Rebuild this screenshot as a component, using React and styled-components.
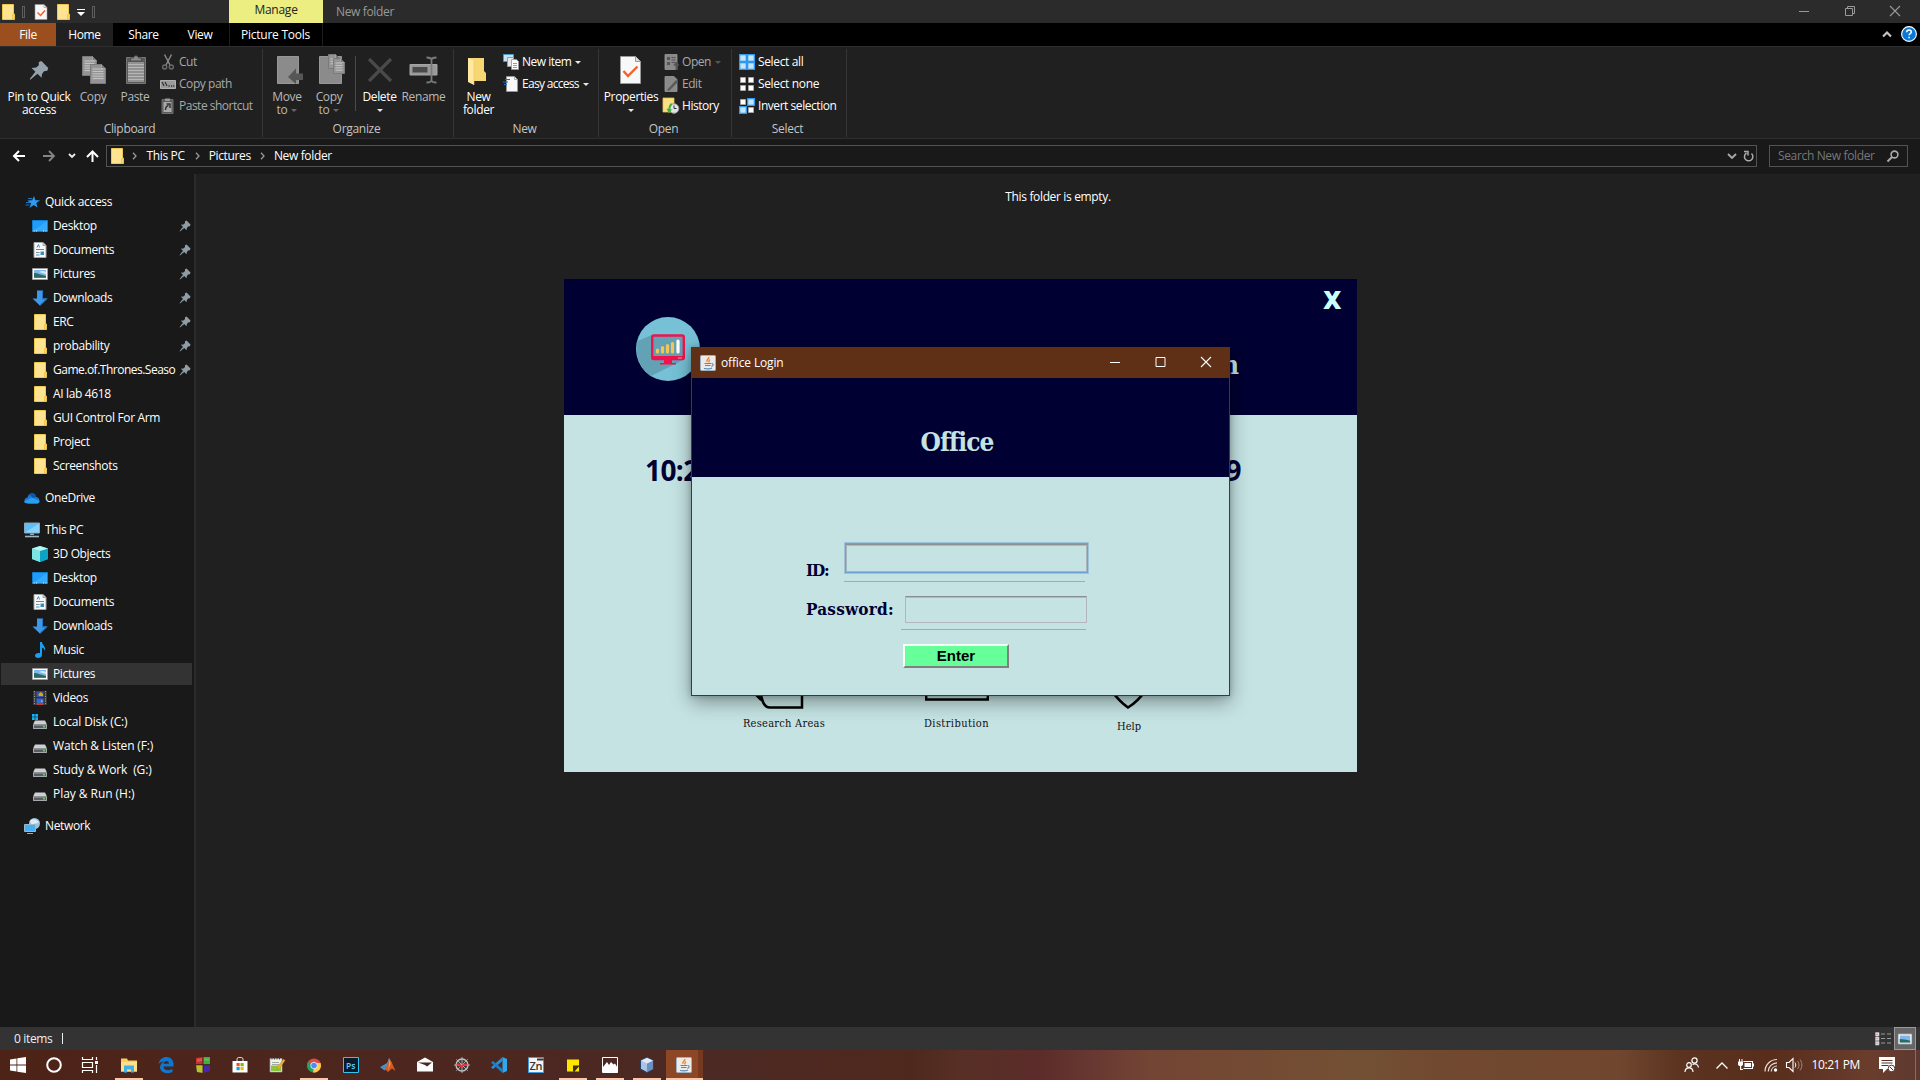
import React from 'react';
import styled, { createGlobalStyle, css } from 'styled-components';

const Global = createGlobalStyle`
  * { box-sizing: border-box; }
  html, body { margin: 0; background: #202020; overflow: hidden; }
  svg { display: block; flex: none; overflow: visible; }
`;

const UI = "'Open Sans', 'Noto Sans', sans-serif";
const SLAB = "'Roboto Slab', 'DejaVu Serif Condensed', 'DejaVu Serif', serif";

const Screen = styled.div`
  width: 1920px; height: 1080px; display: flex; flex-direction: column; position: relative;
  overflow: hidden; background: #202020; color: #fff; font: 12px/16px ${UI}; letter-spacing: -0.35px; white-space: nowrap;
`;
const Label = styled.span`
  letter-spacing: ${p => p.$ls ?? -0.35}px; color: ${p => p.$c || 'inherit'}; white-space: pre;
`;
const Gap = styled.div`flex: none; width: ${p => p.$w || 0}px; height: ${p => p.$h || 0}px;`;

/* ---------- icons ---------- */
const Svg = ({ w = 16, h = 16, vb, children, ...r }) => (
  <svg width={w} height={h} viewBox={vb || `0 0 ${w} ${h}`} fill="none" {...r}>{children}</svg>
);
const Folder = () => (
  <Svg><path d="M2.5.5h11v9.500h1v5.500h-12z" fill="#fee391" stroke="#eec84f" /><path d="M12.500 15V10.500h2V15z" fill="#fbd866" stroke="#e0b840" strokeWidth=".6" /></Svg>
);
const CheckDoc = () => (
  <Svg><path d="M2 .5h9l3 3V15.500H2z" fill="#f6f7f9" stroke="#999" strokeWidth=".6" /><path d="M11 .5v3h3" stroke="#999" strokeWidth=".7" /><path d="M4.500 8.500l3 3 4.500-5" stroke="#f2622a" strokeWidth="1.500" /></Svg>
);
const PinBig = () => (
  <Svg w={30} h={30}><path transform="translate(4.500 6) scale(1.720)" d="M6 1.200l1.500-.6 4 4-.6 1.600-1.900.4-1.200 1.700-.2 2L5.200 8 1 11.500.7 11 4 6.800 1.800 4.700l2.700-.3L6 3z" fill="#96a3ac" /></Svg>
);
const Pin = () => (
  <Svg w={12} h={12}><path d="M6 1.200l1.500-.6 4 4-.6 1.600-1.900.4-1.200 1.700-.2 2L5.200 8 1 11.500.7 11 4 6.800 1.800 4.700l2.700-.3L6 3z" fill="#909da6" /></Svg>
);
const page = (x, y, w, h, k) => (
  <g key={k}><path d={`M${x} ${y}h${w - 4}l4 4v${h - 4}h-${w}z`} fill="#949494" stroke="#7b7b7b" />
    <path d={`M${x + w - 4} ${y}v4h4`} fill="#777" stroke="#aaa" strokeWidth=".8" />
    {Array.from({ length: Math.floor((h - 5) / 2.4) }, (_, i) => <path key={i} d={`M${x + 2} ${y + 4.500 + i * 2.400}h${w - 4}`} stroke="#c8c8c8" />)}</g>
);
const CopyBig = () => <Svg w={30} h={30}>{page(4.500, 2.500, 14, 19, 'a')}{page(12.500, 10.500, 15, 19, 'b')}</Svg>;
const PasteBig = () => (
  <Svg w={30} h={30}><path d="M6.500 3.500h19v26h-19z" fill="#5a5a5a" stroke="#777" /><path d="M8 8h16v20H8z" fill="#919191" /><path d="M10.500 7V4h3c0-3 5-3 5 0h3v3z" fill="#8b8b8b" stroke="#4a4a4a" />
    {[10, 13, 16, 19, 22, 25].map(y => <path key={y} d={`M8 ${y}.5h16`} stroke="#b7b7b7" />)}</Svg>
);
const MoveBig = () => <Svg w={30} h={30}><path d="M5.500 2.500h21v27h-21z" fill="#8b8b8b" stroke="#979797" /><path d="M31 19.500h-7v-5L16 23l8 7v-4h7z" fill="#565656" /></Svg>;
const CopyToBig = () => <Svg w={30} h={30}><path d="M5.500 2.500h22v27h-22z" fill="#8b8b8b" stroke="#979797" />{page(14.500, .5, 11, 14, 'a')}{page(19.500, 4.500, 11, 15, 'b')}</Svg>;
const DeleteBig = () => <Svg w={30} h={30}><path d="M4 5l22 22M26 5L4 27" stroke="#4a4a4a" strokeWidth="3.200" /></Svg>;
const RenameBig = () => <Svg w={30} h={30}><path d="M1 10.500h27v10.500H1z" fill="#999" stroke="#a5a5a5" /><path d="M3.500 13h15v5.500h-15z" fill="#4a4a4a" /><path d="M17.500 3.500c3 0 5 .5 5 2.500 0-2 2-2.500 5-2.500M17.500 28.500c3 0 5-.5 5-2.500 0 2 2 2.500 5 2.500M22.500 6v20" stroke="#7a7a7a" strokeWidth="1.800" /></Svg>;
const NewFolderBig = () => <Svg w={30} h={30}><path d="M4 4h16v13l2 2v8H4z" fill="#f7d774" /><path d="M4 4l6 3v24l-6-3z" fill="#ffe9a2" /><path d="M10 7v24" stroke="#eac65b" strokeWidth=".6" /></Svg>;
const PropsBig = () => <Svg w={30} h={30}><path d="M4.500 2.500h15l5 5v22h-20z" fill="#f7f8fa" stroke="#999" /><path d="M19.500 2.500v5h5" fill="#ddd" stroke="#999" /><path d="M7.500 17l4.500 5 9.500-9.500" stroke="#f2622a" strokeWidth="2.400" /></Svg>;
const Cut = () => <Svg><path d="M4.500.5L10 11M11.500.5L6 11" stroke="#8d8d8d" strokeWidth="1.400" /><circle cx="4.700" cy="13" r="2" stroke="#6b6b6b" strokeWidth="1.400" /><circle cx="11.300" cy="13" r="2" stroke="#6b6b6b" strokeWidth="1.400" /></Svg>;
const CopyPath = () => <Svg><path d="M.5 4.500h15v8H.5z" fill="#9a9a9a" stroke="#b0b0b0" /><path d="M2 6l2 4M5 6l2 4" stroke="#333" strokeWidth="1.200" /><path d="M8.500 10h1.200M11 10h1.200M13.200 10h1.200" stroke="#333" strokeWidth="1.400" /></Svg>;
const PasteShort = () => <Svg><path d="M2 1.500h11v14H2z" fill="#5a5a5a" stroke="#6e6e6e" /><path d="M3.500 4h8v10h-8z" fill="#aaa" /><path d="M5 .5h5V3H5z" fill="#999" /><path d="M5.500 12c0-3 1-4 3-4.500M6.500 6h3.500v4" stroke="#333" strokeWidth="1.500" /></Svg>;
const NewItem = () => <Svg><path d="M.5.5h10v7H.5z" fill="#bfe3f5" stroke="#4c98c8" /><path d="M4.500 3.500h6v9h-6z" fill="#e8e8ea" stroke="#999" /><path d="M8.500 5.500h5l2 2v8h-7z" fill="#fff" stroke="#999" strokeWidth=".8" /><path d="M10 9.500h4M10 11.500h4M10 13.500h4" stroke="#9d8fd0" /></Svg>;
const EasyAccess = () => <Svg><path d="M3.500.5h8l3 3v12h-11z" fill="#f7f8fa" stroke="#999" strokeWidth=".8" /><path d="M11.500.5v3h3" stroke="#999" strokeWidth=".8" /><path d="M2 3.500h5M0 6h5M1 8.500h3" stroke="#2270b8" strokeWidth="1.200" /></Svg>;
const OpenI = () => <Svg><path d="M2 .5h12v15H2z" fill="#8a8a8a" stroke="#999" strokeWidth=".8" /><path d="M4 3h3v3H4zM4 8h3v3H4z" fill="#555" /><path d="M8.500 3.500h4M8.500 6h4M8.500 8.500h4" stroke="#555" /><path d="M12.500 16v-4.500H10l3.500-4 3 4h-2V16z" fill="#555" /></Svg>;
const EditI = () => <Svg><path d="M2 .5h9l3 3v12H2z" fill="#8a8a8a" stroke="#999" strokeWidth=".8" /><path d="M4 14L13 4l2 2-9 9z" fill="#5a5a5a" /></Svg>;
const HistoryI = () => <Svg><path d="M0 0h11v14H0z" fill="#fbdf80" stroke="#e8c24b" strokeWidth=".8" /><circle cx="11" cy="10.500" r="4.800" fill="#dfe3e6" stroke="#999" /><path d="M11 7.500v3h2.500" stroke="#333" /><path d="M8 5c-2 2-2.500 3.500-2.300 6l-2.200-.5L6 15.500l3-4-1.500-.2C7.300 9.500 8 8 9.500 6.500z" fill="#3bb33b" /></Svg>;
const Grid4 = ({ on }) => (
  <Svg>{[[0, 0], [8, 0], [0, 8], [8, 8]].map(([x, y], i) => (on[i]
    ? <g key={i}><path d={`M${x} ${y}h8v8h-8z`} fill="#2f98ec" /><path d={`M${x + 1.300} ${y + 1.300}h5.400v5.400h-5.400z`} fill="#c4e6fb" /></g>
    : <path key={i} d={`M${x + 1.500} ${y + 1.500}h5v5h-5z`} fill="#fff" stroke="#a5a5a5" />))}</Svg>
);
const Star = () => <Svg><g transform="translate(1 0)"><path d="M9 2l1.300 4.200 4.700.1-3.700 2.700 1.200 4.500-3.800-2.600L4.500 14l1.600-4.700L2.300 6.500l4.800-.2z" fill="#2b9cf2" /><path d="M1 8.500h4M.5 11h4M3 4.500h4" stroke="#1d7fd0" strokeWidth=".9" /></g></Svg>;
const Desktop = () => <Svg><path d="M.5 2.500h15v11H.5z" fill="#1e9dfa" stroke="#0f7ed0" /><path d="M1 13L15 3v10z" fill="#34abff" /><path d="M1.500 13h1.200M4 13h1M11 13h1M13.500 13h1" stroke="#fff" strokeWidth=".9" /></Svg>;
const Docs = () => <Svg><path d="M2 .5h9l3 3v12H2z" fill="#f7f8fa" stroke="#a5a5a5" /><path d="M11 .5v3h3" fill="#ccc" stroke="#999" strokeWidth=".8" /><path d="M5 5.500l1.500-3 1 3M4 7.500h8M4 13h3.500" stroke="#3b93cf" /><path d="M4 10.500h3.500" stroke="#888" /><path d="M8.500 9.500h3.500v3.500H8.500z" fill="#3a8eb5" /></Svg>;
const Pics = () => <Svg><path d="M.5 2.500h15v11H.5z" fill="#fff" stroke="#9c9c9c" /><path d="M2 4h12v8H2z" fill="#7fb6ee" /><path d="M2 7c4 0 7 2 12 3v2H2z" fill="#2d6b5f" /><path d="M7 6c3-1.500 5-1 7 0v2z" fill="#d8ebfb" /><path d="M2 11h12v1H2z" fill="#3c78b5" /></Svg>;
const Down = () => <Svg><path d="M5 .5h6v8h4.500L8 15.800.5 8.500H5z" fill="#3d97ea" /><path d="M10 .5h1v8h4.500L8 15.800V14.500l5.500-5H10z" fill="#2275c4" /></Svg>;
const Cloud = () => <Svg><path d="M3.500 13.500C-.5 13-.5 8 3.500 7.500 5 2 11.500 2 12 7c4 .3 5 6 1 6.500z" fill="#1b78d6" /><path d="M5 13.500c-3 0-5-1-5-2l8-4 7.500 3.500c0 2-1.500 2.500-3 2.500z" fill="#28a0ee" /><path d="M5.500 4.500c2-2 5.500-1.500 6.500 2.500L9 8z" fill="#0a56b0" /></Svg>;
const PC = () => <Svg><path d="M.5 1h15v10H.5z" fill="#5fbdf8" stroke="#8ca6b8" /><path d="M1 10.500L15 1.500v9z" fill="#8ad2ff" /><path d="M6 11.500h4v1.500H6z" fill="#9aa" /><path d="M1 14.500h14" stroke="#9fb4c2" strokeWidth="1.600" /></Svg>;
const Cube3 = () => <Svg><path d="M8 0l8 2.500v10.500L8 16 0 13V2.500z" fill="#38c8d8" /><path d="M8 5l8-2.500V13l-8 3z" fill="#0ba4c4" /><path d="M0 2.500L8 5v11l-8-3z" fill="#7de3e3" /><path d="M0 2.500L8 0l8 2.500L8 5z" fill="#baf3ef" /></Svg>;
const Music = () => <Svg><path d="M8 0h2c0 3 4 4 3 9-.6-2-1.500-3-3-3.300V13c0 3.500-6.500 4-7 1-.3-2.500 3-3.500 5-2.800z" fill="#17a0f5" /></Svg>;
const Video = () => <Svg><path d="M1 1h14v14H1z" fill="#333" /><path d="M2.500 1v14M13.500 1v14" stroke="#999" strokeWidth="1.200" strokeDasharray="1.200 1.200" /><path d="M4.500 1.500h7V7h-7z" fill="#3a56a8" /><path d="M6.500 4.500l2-2.500 2.500 2v2H7z" fill="#d9a427" /><path d="M4.500 8.500h7V15h-7z" fill="#2e6ad8" /><path d="M4.500 14l4-1.500 3 1.500v1h-7z" fill="#c33b2c" /><path d="M9 10l2 1-1.500 1.500z" fill="#f0c040" /></Svg>;
const Drive = ({ win }) => <Svg><path d="M3 6.500h10l2 4H1z" fill="#cdd0d3" /><path d="M1 10.500h14v4.500H1z" fill="#7b7f83" /><path d="M1.500 11h13v3.500h-13z" fill="#5a5d60" stroke="#bfc2c5" strokeWidth=".7" /><circle cx="12" cy="12.800" r="1" fill="#4fe04f" />{win && <path d="M0 0h2.700v2.700H0zM3.300 0H6v2.700H3.300zM0 3.300h2.700V6H0zM3.300 3.300H6V6H3.300z" fill="#17b2f2" />}</Svg>;
const NetworkI = () => <Svg><circle cx="10.500" cy="5.500" r="5.500" fill="#9fc3dc" /><path d="M6 3c3-3 6-2 9 1-3 3-5 0-7 4z" fill="#dcebf5" /><path d="M.5 6.500h11v7H.5z" fill="#45aef5" stroke="#9cb7c8" /><path d="M3 15.500h6" stroke="#9ab" /></Svg>;
const Java = () => <Svg><rect x=".5" y=".5" width="15" height="15" rx="1" fill="#ecebea" stroke="#9fb1c0" /><path d="M9 2c0 2-3 2.500-2 5M10 4.500c-1.500 1-1 1.500-1 3" stroke="#ec8420" strokeWidth="1.300" /><path d="M4.500 8.500h6.500M5 10.500h5.500M4 13.500c3 .6 6 .6 8-.5M11.500 8.500c2.500-.2 2 2.500-.2 2.800" stroke="#5b85a9" strokeWidth="1.100" /></Svg>;

const Min = ({ c }) => <Svg w={10} h={10}><path d="M0 5.500h10" stroke={c} /></Svg>;
const Close = ({ c }) => <Svg w={10} h={10}><path d="M0 0l10 10M10 0L0 10" stroke={c} strokeWidth="1.100" /></Svg>;
const Drop = styled.span`
  display: inline-block; border: 3px solid transparent; border-top-color: ${p => p.$c || '#e8e8e8'};
  border-bottom: 0; margin-left: ${p => p.$ml ?? 4}px; vertical-align: 2px;
`;

/* ---------- title bar + tabs ---------- */
const TitleBar = styled.div`height: 23px; flex: none; display: flex; align-items: center; background: #2b2b2b;`;
const QBar = styled.i`width: 3px; height: 12px; border: 1px solid #5e5e5e; flex: none;`;
const ManageTab = styled.div`width: 94px; height: 23px; background: #ecee82; color: #222; text-align: center; line-height: 20px; letter-spacing: -0.25px;`;
const TitleText = styled.div`color: #999; margin-left: 13px; flex: 1; padding-top: 1px;`;
const Controls = styled.div`display: flex; align-items: center; gap: ${p => p.$gap}px; padding-right: ${p => p.$pr}px; padding-bottom: 2px;`;
const Tabs = styled.div`height: 23px; flex: none; display: flex; background: #000; line-height: 24px;`;
const Tab = styled.div`width: ${p => p.$w}px; text-align: center; background: ${p => p.$bg || 'none'}; ${p => p.$edge && css`border-left: 1px solid #1d1d1d; border-right: 1px solid #1d1d1d; letter-spacing: -0.25px; padding-right: 1px;`}`;
const TabEnd = styled.div`flex: 1; display: flex; justify-content: flex-end; align-items: center; padding: 0 3px 1px 0; gap: 9px;`;

/* ---------- ribbon ---------- */
const Ribbon = styled.div`height: 93px; flex: none; display: flex; background: #202020; border-top: 1px solid #2e2e2e; border-bottom: 1px solid #2e2e2e; padding-top: 2px;`;
const Group = styled.div`width: ${p => p.$w}px; height: 88px; flex: none; display: flex; flex-direction: column; border-right: 1px solid #363636;`;
const GroupBody = styled.div`height: 72px; flex: none; display: flex;`;
const GroupName = styled.div`flex: none; text-align: center; color: #c4c4c4; line-height: 16px; padding-right: 3px; letter-spacing: -0.3px;`;
const Big = styled.div`
  width: ${p => p.$w}px; flex: none; display: flex; flex-direction: column; align-items: center; padding-top: 5px;
  line-height: 13px; text-align: center; color: ${p => p.$dim ? '#b8b8b8' : '#fff'};
  svg { margin-bottom: 6px; }
`;
const SmallCol = styled.div`display: flex; flex-direction: column; padding-top: 2px; padding-left: ${p => p.$pl || 0}px;`;
const Small = styled.div`height: 22px; flex: none; display: flex; align-items: center; gap: 3px; color: ${p => p.$dim ? '#a9a9a9' : '#fff'};`;
const VLine = styled.i`width: 1px; height: 55px; margin: 7px 0 0 8px; background: #4a4a4a;`;

const BigBtn = ({ w, icon, l1, l2, dim, drop }) => (
  <Big $w={w} $dim={dim}>{icon}<Label>{l1}</Label>{(l2 || drop) && <Label>{l2}{drop && <Drop $ml={l2 ? 4 : 0} $c={dim && '#666'} />}</Label>}</Big>
);
const SmallBtn = ({ icon, t, dim, drop, ls }) => <Small $dim={dim}>{icon}<Label $ls={ls ?? -0.45}>{t}</Label>{drop && <Drop $ml={1} $c={dim && '#555'} />}</Small>;

/* ---------- address row ---------- */
const AddressRow = styled.div`height: 35px; flex: none; display: flex; align-items: flex-start; padding: 6px 12px 0 12px; background: #191919;`;
const NavArrows = styled.div`width: 94px; height: 22px; display: flex; align-items: center;`;
const AddressBox = styled.div`width: 1651px; height: 22px; border: 1px solid #535353; display: flex; align-items: center; padding: 0 2px 0 2px;`;
const SearchBox = styled.div`width: 139px; height: 22px; margin-left: 12px; border: 1px solid #535353; display: flex; align-items: center; justify-content: space-between; padding: 0 8px 0 8px; color: #777;`;
const Fill = styled.div`flex: 1;`;
const Crumb = () => <Svg w={5} h={8}><path d="M1 .8L4 4 1 7.200" stroke="#999" strokeWidth="1.300" /></Svg>;

/* ---------- main ---------- */
const Main = styled.div`flex: 1; display: flex; min-height: 0;`;
const Nav = styled.div`width: 194px; background: #191919; padding-top: 16px; display: flex; flex-direction: column;`;
const NavRow = styled.div`
  height: 24px; flex: none; display: flex; align-items: center; padding: 0 3px 0 ${p => p.$top ? 24 : 32}px;
  background: ${p => p.$sel ? 'linear-gradient(#333,#333) 1px 1px / 191px 22px no-repeat' : 'none'};
  gap: 5px;
`;
const NavText = styled.div`flex: 1; min-width: 0; letter-spacing: ${p => p.$ls ?? -0.35}px; white-space: pre;`;
const Content = styled.div`flex: 1; border-left: 2px solid #2b2b2b; background: #202020; text-align: center; padding-top: 15px;`;
const StatusBar = styled.div`height: 23px; flex: none; background: #333; display: flex; align-items: center; padding-left: 14px; color: #eee;`;
const Caret = styled.i`width: 1px; height: 11px; background: #eee; margin-left: 10px;`;
const ViewBtn = styled.div`width: 22px; height: 23px; background: #666; border: 1px solid #999; display: flex; align-items: center; justify-content: center; margin: 0 4px 0 3px;`;

/* ---------- taskbar ---------- */
const Taskbar = styled.div`
  height: 30px; flex: none; display: flex; color: #fff;
  background: linear-gradient(90deg, #4d2318 0, #4c2924 700px, #4f281d 910px, #572f25 960px, #5c2c2a 1040px, #673731 1090px, #734534 1150px, #735033 1360px, #714830 1450px, #70462f 1620px, #5b331f 1680px, #582d1c 1770px, #6a3d2d 1870px, #5e3930 1920px);
`;
const TaskCell = styled.div`
  width: ${p => p.$w || 37}px; height: 30px; flex: none; display: flex; align-items: center; justify-content: center;
  background: ${p => p.$active ? 'linear-gradient(90deg, #8d4727 32px, #75391f 32px)' : 'none'};
  ${p => p.$run && css`background: linear-gradient(#fdc6a8, #fdc6a8) 50% 100% / 28px 2px no-repeat;`}
  ${p => p.$active && css`border-bottom: 2px solid #fdc6a8; padding-top: 2px;`}
`;
const Tray = styled.div`flex: 1; display: flex; align-items: center; justify-content: flex-end; padding-right: 4px;`;
const TrayEdge = styled.i`width: 1px; height: 30px; background: #8b6a5f; margin-left: 20px;`;

/* ---------- floating windows ---------- */
const Manager = styled.div`position: absolute; left: 564px; top: 279px; width: 793px; height: 493px; background: #c5e3e3; display: flex; flex-direction: column; color: #000032;`;
const ManagerHead = styled.div`height: 136px; flex: none; background: #000032; display: flex; justify-content: space-between; padding: 0 16px 0 72px;`;
const Logo = styled.div`padding-top: 38px;`;
const HeadRight = styled.div`width: 120px; display: flex; flex-direction: column;`;
const CloseX = styled.div`text-align: right; color: #ccffff; font: 800 25px/30px 'Open Sans', sans-serif; margin-top: 5px;`;
const HeadTail = styled.div`color: #c5e3e3; font: bold 26px/30px ${SLAB}; margin-top: 36px; padding-right: 102px; text-align: right; letter-spacing: 0;`;
const ClockRow = styled.div`display: flex; justify-content: space-between; font: bold 28px/36px 'Open Sans', sans-serif; padding: 37px 116px 0 81px; letter-spacing: -0.6px;`;
const Menu = styled.div`margin-top: auto; height: 115px; display: flex; padding-left: 151px;`;
const MenuItem = styled.div`
  width: ${p => p.$w}px; display: flex; flex-direction: column; align-items: center; gap: ${p => p.$gap}px;
  font: 11px/17px ${SLAB}; font-stretch: condensed; color: #111; letter-spacing: ${p => p.$ls || 0}px;
`;
const Login = styled.div`
  position: absolute; left: 691px; top: 347px; width: 539px; height: 349px; display: flex; flex-direction: column;
  border: 1px solid #5f3016; border-top: 0; background: #c5e3e3; color: #000032; box-shadow: 0 6px 18px rgba(0,0,0,.38), 0 0 5px rgba(0,0,0,.2);
`;
const LoginTitle = styled.div`height: 31px; flex: none; background: #5f3016; color: #fff; display: flex; align-items: center; padding-left: 8px; gap: 5px;`;
const LoginHead = styled.div`height: 99px; flex: none; background: #000032; color: #c5e3e3; text-align: center; font: bold 26px/36px ${SLAB}; font-stretch: condensed; letter-spacing: -0.9px; padding: 46px 7px 0 0;`;
const Form = styled.div`padding: 65px 0 0 114px; display: flex; flex-direction: column;`;
const FormRow = styled.div`display: flex; align-items: flex-start; height: ${p => p.$h}px;`;
const FieldName = styled.label`
  width: ${p => p.$w}px; flex: none; font: bold 17px/22px ${SLAB}; font-stretch: condensed; letter-spacing: ${p => p.$ls}px; padding-top: ${p => p.$pt}px;
`;
const FieldWrap = styled.div`width: ${p => p.$w}px; height: ${p => p.$h}px; border-bottom: 1px solid #a0abad; padding: ${p => p.$pt || 0}px 0 0 ${p => p.$pl || 0}px; flex: none;`;
const Input = styled.div`
  width: ${p => p.$w}px; height: ${p => p.$h}px; border: 1px solid #b3b6ba; border-top-color: #8a9091; box-shadow: inset 0 1px 0 #a9bdbe;
  ${p => p.$focus && css`border: 1px solid #6f9fd4; outline: 1px solid #9dc4dd; outline-offset: 0; box-shadow: inset 0 1px 0 #8d9395, inset 0 2px 0 #a9bdbe, inset 1px 0 0 #a9b4bb, inset -1px -1px 0 #a9b4bb;`}
`;
const Enter = styled.button`
  width: 106px; height: 24px; margin: 14px 0 0 97px; padding: 0 0 1px; background: #66ff99; color: #000; font: bold 15px/18px 'Liberation Sans', Arial, sans-serif;
  border: 2px solid; border-color: #f4fff8 #808080 #808080 #f4fff8; letter-spacing: 0;
`;

const quick = [
  ['Desktop', <Desktop />, 1], ['Documents', <Docs />, 1], ['Pictures', <Pics />, 1], ['Downloads', <Down />, 1], ['ERC', <Folder />, 1],
  ['probability', <Folder />, 1], ['Game.of.Thrones.Seaso', <Folder />, 1, -0.5], ['AI lab 4618', <Folder />], ['GUI Control For Arm', <Folder />],
  ['Project', <Folder />], ['Screenshots', <Folder />],
];
const pcItems = [
  ['3D Objects', <Cube3 />], ['Desktop', <Desktop />], ['Documents', <Docs />], ['Downloads', <Down />], ['Music', <Music />],
  ['Pictures', <Pics />, 1], ['Videos', <Video />], ['Local Disk (C:)', <Drive win />, 0, -0.15], ['Watch & Listen (F:)', <Drive />, 0, -0.15],
  ['Study & Work  (G:)', <Drive />, 0, -0.15], ['Play & Run (H:)', <Drive />, 0, -0.05],
];

const tasks = [
  [<Svg><path d="M0 1.500h6l1 2h9v11H0z" fill="#f7cf62" /><path d="M0 5h16v9.500H0z" fill="#ffe08a" /><path d="M3 15.500V8.500h10v7h-3v-3H6v3z" fill="#3fb0e8" /></Svg>, 1],
  [<Svg><path d="M.5 7C1.500 2 5 0 8.500 0c4.500 0 7 3.500 7 7v2.500H5.500c0 4 5.500 4.500 9 2.500v3C9 17.500 2.500 16 2 10.500 2 7.500 4 5.500 6 4.500 3.500 4.500 1.500 5.500.5 7zm5-.2h5.500c0-3.800-5-3.800-5.500 0z" fill="#0b78d4" fillRule="evenodd" /></Svg>],
  [<Svg><path d="M1 1l7-1v7.500H1z" fill="#c8302c" /><path d="M8 0h7v7.500H8z" fill="#3fae3c" /><path d="M1 8h7v8l-6-1z" fill="#b8c22c" /><path d="M8 8h7v6l-7 2z" fill="#4a25b0" /><path d="M8 0v16M1 7.800h14" stroke="#301818" strokeWidth=".8" /><path d="M2 2l5-1v3L2 5zM9 1.500h5v2H9z" fill="#fff" opacity=".2" /></Svg>],
  [<Svg><path d="M5 4V1.500C6 0 10 0 11 1.500V4" stroke="#ddd" /><path d="M.5 4h15v11.500H.5z" fill="#fff" /><path d="M4.500 6h3.200v3.200H4.500z" fill="#f25022" /><path d="M8.500 6h3.200v3.200H8.500z" fill="#7fba00" /><path d="M4.500 10h3.200v3.200H4.500z" fill="#00a4ef" /><path d="M8.500 10h3.200v3.200H8.500z" fill="#ffb900" /></Svg>],
  [<Svg><path d="M1 1.500h12V15H1z" fill="#f0f4e8" stroke="#999" strokeWidth=".7" /><path d="M2 8.500h10V14H2z" fill="#8cc63f" /><path d="M3 .5v2M5.500.5v2M8 .5v2M10.500.5v2" stroke="#444" /><path d="M3 5.500h7M3 7.500h7" stroke="#888" strokeWidth=".7" /><path d="M8 13l.5-3 6-8 1.500 1.500-5.500 8z" fill="#f0b429" stroke="#884" strokeWidth=".4" /></Svg>],
  [<Svg><circle cx="8" cy="8.500" r="7" fill="#dd4b3e" /><path d="M8 8.500L2 5a7 7 0 0 0 5 10.400z" fill="#1da462" /><path d="M8 8.500l-.9 7A7 7 0 0 0 14.500 6H8z" fill="#ffcd46" /><circle cx="8" cy="8.500" r="3.300" fill="#4c8bf5" stroke="#fff" strokeWidth=".7" /></Svg>, 1],
  [<Svg><path d="M.5.5h15v15H.5z" fill="#0a1c2c" stroke="#31c5f4" /><text x="3" y="11.500" fill="#5ccdf5" fontSize="8.500" fontFamily="Open Sans" fontWeight="600" letterSpacing="0">Ps</text></Svg>],
  [<Svg><path d="M0 10l4.500-2.500L7 6l2-5 3 5-4 5-3.500 2.500z" fill="#4a8fc4" /><path d="M9 1l3 5 3.500 8L12 11.500 8 15 5 12l3-5z" fill="#d95a1e" /><path d="M9.500 2l1 5-2.500 6 1-5z" fill="#f6b042" /></Svg>],
  [<Svg><path d="M0 5l8-4.500L16 5v9.500H0z" fill="#fff" /><path d="M1 5.500h14l-5 4-2-1.500z" fill="#4c2924" /></Svg>],
  [<Svg><circle cx="8" cy="8" r="6" fill="#3b3b3b" stroke="#c4c4c4" strokeWidth="1.300" /><path d="M8 0v16M0 8h16M2.300 2.300l11.400 11.400M13.700 2.300L2.300 13.700" stroke="#b5b5b5" strokeWidth=".9" /><path d="M3 8.500c2-4 3.500 3 5.500 0s3 1 4.500-1.500" stroke="#e33" strokeWidth="1.900" /></Svg>],
  [<Svg><path d="M11.500 0L16 2v12l-4.500 2z" fill="#2fa8ee" /><path d="M11.500 0v4L2 12 0 10.500z" fill="#2390d8" /><path d="M11.500 16v-4L2 4 0 5.500z" fill="#1b7fc8" /></Svg>],
  [<Svg><path d="M.5.5h15v15H.5z" fill="#f4f4f4" stroke="#3d9ade" /><path d="M9 2.500h6.500" stroke="#333" strokeWidth="2" /><text x="1.500" y="13" fill="#333" fontSize="11" fontFamily="Open Sans" fontWeight="600" letterSpacing="-.3">Zn</text></Svg>],
  [<Svg><path d="M2 2.500h12V9L8.500 14.500H2z" fill="#ffe600" /><path d="M8 14.500V8.500h6v6z" fill="#3d3220" /><path d="M14 9.500v5H9.500z" fill="#ffe600" /></Svg>, 1],
  [<Svg><path d="M.5.5h15v15H.5z" stroke="#fff" /><path d="M1 15.500V10l4-5 2 3 2-3 2.500 2.500 1.500-1 2.500 4v5z" fill="#fff" /></Svg>, 1],
  [<Svg><path d="M8 .5l6.500 3v8.500L8 15.500 1.500 12V3.500z" fill="#a9c4e6" stroke="#28405e" /><path d="M8 6.500l6-3V12L8 15z" fill="#6d8fc0" /><path d="M2 3.500l6-2.700 6 2.700-6 3z" fill="#dce9f8" /></Svg>, 1],
];

export default function App() {
  return (
    <>
      <Global />
      <Screen>
        <TitleBar>
          <Folder /><Gap $w={6} /><QBar /><Gap $w={8} /><CheckDoc /><Gap $w={6} /><Folder /><Gap $w={6} />
          <Svg w={8} h={8}><path d="M0 1.500h8" stroke="#fff" /><path d="M0 4h8L4 8z" fill="#fff" /></Svg>
          <Gap $w={7} /><QBar /><Gap $w={134} />
          <ManageTab>Manage</ManageTab>
          <TitleText>New folder</TitleText>
          <Controls $gap={35.5} $pr={20}>
            <Min c="#999" />
            <Svg w={10} h={10}><path d="M.5 2.500h7v7h-7zM2.500 2.500v-2h7v7h-2" stroke="#999" /></Svg>
            <Close c="#999" />
          </Controls>
        </TitleBar>
        <Tabs>
          <Tab $w={56} $bg="#9b4e1e">File</Tab>
          <Tab $w={57} $bg="#202020">Home</Tab><Gap $w={1} />
          <Tab $w={59}>Share</Tab><Tab $w={54}>View</Tab><Gap $w={2} />
          <Tab $w={94} $edge>Picture Tools</Tab>
          <TabEnd>
            <Svg w={10} h={6}><path d="M1 5.500l4-4 4 4" stroke="#c4c4c4" strokeWidth="2.200" /></Svg>
            <Svg><circle cx="8" cy="8" r="7.400" fill="#0b78d8" stroke="#fff" strokeWidth="1.100" /><path d="M5.700 6.200c0-3 4.600-3 4.600-.2 0 1.600-2.200 1.600-2.200 3.300M8.100 10.700v1.600" stroke="#fff" strokeWidth="1.500" /></Svg>
          </TabEnd>
        </Tabs>
        <Ribbon>
          <Group $w={263}>
            <GroupBody>
              <BigBtn w={78} icon={<PinBig />} l1="Pin to Quick" l2="access" />
              <BigBtn w={30} icon={<CopyBig />} l1="Copy" dim /><Gap $w={2} />
              <BigBtn w={50} icon={<PasteBig />} l1="Paste" dim />
              <SmallCol>
                <SmallBtn icon={<Cut />} t="Cut" dim /><SmallBtn icon={<CopyPath />} t="Copy path" dim /><SmallBtn icon={<PasteShort />} t="Paste shortcut" dim ls={-0.5} />
              </SmallCol>
            </GroupBody>
            <GroupName>Clipboard</GroupName>
          </Group>
          <Group $w={191}>
            <GroupBody>
              <BigBtn w={48} icon={<MoveBig />} l1="Move" l2="to" dim drop />
              <BigBtn w={36} icon={<CopyToBig />} l1="Copy" l2="to" dim drop />
              <VLine />
              <BigBtn w={47} icon={<DeleteBig />} l1="Delete" drop />
              <BigBtn w={41} icon={<RenameBig />} l1="Rename" dim />
            </GroupBody>
            <GroupName>Organize</GroupName>
          </Group>
          <Group $w={145}>
            <GroupBody>
              <BigBtn w={49} icon={<NewFolderBig />} l1="New" l2="folder" />
              <SmallCol><SmallBtn icon={<NewItem />} t="New item" drop ls={-0.5} /><SmallBtn icon={<EasyAccess />} t="Easy access" drop ls={-0.7} /></SmallCol>
            </GroupBody>
            <GroupName>New</GroupName>
          </Group>
          <Group $w={133}>
            <GroupBody>
              <BigBtn w={64} icon={<PropsBig />} l1="Properties" drop />
              <SmallCol><SmallBtn icon={<OpenI />} t="Open" dim drop /><SmallBtn icon={<EditI />} t="Edit" dim /><SmallBtn icon={<HistoryI />} t="History" /></SmallCol>
            </GroupBody>
            <GroupName>Open</GroupName>
          </Group>
          <Group $w={115}>
            <GroupBody>
              <SmallCol $pl={7}>
                <SmallBtn icon={<Grid4 on={[1, 1, 1, 1]} />} t="Select all" ls={-0.35} />
                <SmallBtn icon={<Grid4 on={[0, 0, 0, 0]} />} t="Select none" ls={-0.35} />
                <SmallBtn icon={<Grid4 on={[0, 1, 1, 0]} />} t="Invert selection" />
              </SmallCol>
            </GroupBody>
            <GroupName>Select</GroupName>
          </Group>
        </Ribbon>
        <AddressRow>
          <NavArrows>
            <Svg w={14} h={12}><path d="M13 6H2M7 1L2 6l5 5" stroke="#fff" strokeWidth="2" /></Svg><Gap $w={16} />
            <Svg w={14} h={12}><path d="M1 6h11M7 1l5 5-5 5" stroke="#858585" strokeWidth="1.800" /></Svg><Gap $w={12} />
            <Svg w={8} h={6}><path d="M1 1l3 3 3-3" stroke="#eee" strokeWidth="1.800" /></Svg><Gap $w={10} />
            <Svg w={13} h={12}><path d="M6.500 12V2M1 7l5.500-5.500L12 7" stroke="#fff" strokeWidth="2" /></Svg>
          </NavArrows>
          <AddressBox>
            <Folder /><Gap $w={7} /><Crumb /><Gap $w={9.5} /><Label>This PC</Label><Gap $w={10.5} /><Crumb /><Gap $w={8.5} />
            <Label>Pictures</Label><Gap $w={9.5} /><Crumb /><Gap $w={8.5} /><Label>New folder</Label>
            <Fill />
            <Svg w={10} h={7}><path d="M1 1l4 4 4-4" stroke="#aaa" strokeWidth="1.800" /></Svg><Gap $w={6} />
            <Svg w={11} h={12}><path d="M8.500 3.500a4.200 4.200 0 1 1-5-.5M1 1.500h4v4" stroke="#aaa" strokeWidth="1.500" /></Svg>
          </AddressBox>
          <SearchBox><Label>Search New folder</Label><Svg w={12} h={12}><circle cx="7.500" cy="4.500" r="3.400" stroke="#aaa" strokeWidth="1.600" /><path d="M5 7L.5 11.500" stroke="#aaa" strokeWidth="2" /></Svg></SearchBox>
        </AddressRow>
        <Main>
          <Nav>
            <NavRow $top><Star /><NavText>Quick access</NavText></NavRow>
            {quick.map(([t, ic, pin, ls]) => <NavRow key={t}>{ic}<NavText $ls={ls}>{t}</NavText>{pin && <Pin />}</NavRow>)}
            <Gap $h={8} />
            <NavRow $top><Cloud /><NavText>OneDrive</NavText></NavRow>
            <Gap $h={8} />
            <NavRow $top><PC /><NavText>This PC</NavText></NavRow>
            {pcItems.map(([t, ic, sel, ls]) => <NavRow key={t} $sel={sel}>{ic}<NavText $ls={ls}>{t}</NavText></NavRow>)}
            <Gap $h={8} />
            <NavRow $top><NetworkI /><NavText>Network</NavText></NavRow>
          </Nav>
          <Content>This folder is empty.</Content>
        </Main>
        <StatusBar>
          <Label>0 items</Label><Caret /><Fill />
          <Svg w={16} h={13}>{[0, 4.500, 9].map(y => <g key={y}><path d={`M.5 ${y + .5}h3.500v3.500H.5z`} fill="#fff" stroke="#aaa" strokeWidth=".8" /><path d={`M6 ${y + 2}h4M12 ${y + 2}h4`} stroke="#999" /><path d={`M2 ${y + 1.500}v1.500`} stroke="#b44" /></g>)}</Svg>
          <ViewBtn><Svg w={14} h={12} vb="0 2 16 12"><path d="M.5 2.500h15v11H.5z" fill="#fff" stroke="#ccc" /><path d="M2 4h12v8H2z" fill="#7fb6ee" /><path d="M2 8c4 0 7 1 12 2v2H2z" fill="#2d6b5f" /></Svg></ViewBtn>
        </StatusBar>
        <Taskbar>
          <TaskCell $w={36}><Svg><path d="M0 2.500l6.500-1V7.600H0zM7.300 1.300L16 0v7.600H7.300zM0 8.400h6.500v6.200l-6.500-1zM7.300 8.400H16V16l-8.700-1.300z" fill="#fff" /></Svg></TaskCell>
          <TaskCell $w={36}><Svg><circle cx="8" cy="8" r="6.800" stroke="#fff" strokeWidth="2" /></Svg></TaskCell>
          <TaskCell $w={36}><Svg><path d="M.5 0v2.500h10V0M.5 16v-2.500h10V16M.5 5.500h10v5H.5zM14.500 0v3M14.500 8v8" stroke="#fff" strokeWidth="1.200" /><path d="M13 4h3v3h-3z" fill="#fff" /></Svg></TaskCell>
          <Gap $w={2.5} />
          {tasks.map(([ic, run], i) => <TaskCell key={i} $run={run}>{ic}</TaskCell>)}
          <TaskCell $active><Java /></TaskCell>
          <Tray>
            <Svg><circle cx="10.500" cy="3.500" r="2.600" stroke="#fff" strokeWidth="1.200" /><circle cx="5" cy="8" r="2.300" stroke="#fff" strokeWidth="1.200" /><path d="M1 15c0-5.500 8-5.500 8 0M8.500 7.500c3-1.500 5.500 0 6 3" stroke="#fff" strokeWidth="1.200" /></Svg>
            <Gap $w={16} />
            <Svg w={12} h={7}><path d="M.5 6.500L6 1l5.500 5.500" stroke="#fff" strokeWidth="1.300" /></Svg>
            <Gap $w={10} />
            <Svg w={16} h={12}><path d="M5.500 2.500h9v7h-9" stroke="#fff" strokeWidth="1.100" /><path d="M6.500 4H13v4H6.500zM15 4.500h1v3h-1z" fill="#fff" /><path d="M0 2.500h5v2.500c0 3-5 3-5 0zM1 0h1v3H1zM3.500 0h1v3h-1zM2 6h1.200v4H5v1H2z" fill="#fff" /></Svg>
            <Gap $w={10} />
            <Svg w={14} h={14}><path d="M1 13.500A12 12 0 0 1 13 1.500M4.200 13.500A9 9 0 0 1 13 4.800M7.200 13.500A6 6 0 0 1 13 8" stroke="#e8dcd6" strokeWidth="1.200" /><circle cx="11.500" cy="12" r="1.700" fill="#fff" /></Svg>
            <Gap $w={8} />
            <Svg w={16} h={14}><path d="M.5 4.500H3l4-4v13l-4-4H.5z" stroke="#fff" strokeWidth="1.100" /><path d="M9 4.500c1 1.500 1 3.500 0 5" stroke="#fff" /><path d="M11.500 3c2 2.500 2 5.500 0 8M14 1.500c2.500 3.500 2.500 7.500 0 11" stroke="#a48a7e" /></Svg>
            <Gap $w={9} />
            <Label $ls={-0.4}>10:21 PM</Label>
            <Gap $w={19} />
            <Svg w={16} h={16}><path d="M0 0h16v12H8l-4 4v-4H0z" fill="#fff" /><path d="M2.500 3.500h11M2.500 6h11M2.500 8.500h7" stroke="#5c3322" strokeWidth="1.200" /><circle cx="12.500" cy="11.500" r="3.300" fill="#fff" stroke="#5c3322" /><path d="M11 10l3 3" stroke="#5c3322" /></Svg>
            <TrayEdge />
          </Tray>
        </Taskbar>

        <Manager>
          <ManagerHead>
            <Logo>
              <Svg w={64} h={64}>
                <circle cx="32" cy="32" r="32" fill="#76c1d6" />
                <path d="M1.500 24L16 18l33 24-34 17C5 53-2 38 1.500 24z" fill="#62a2b4" />
                <rect x="16.200" y="18.500" width="31.600" height="23.500" rx="1.500" fill="#62a2b4" stroke="#f0134d" strokeWidth="2.400" />
                <path d="M16 39h32v4H16zM28 43h8v3h4v1.500H24V46h4z" fill="#f0134d" /><path d="M42 41h4" stroke="#f9c" />
                <path d="M21.500 33v2M26.500 30.500v4.500M31.500 28.500v6.500M36.500 26.500v8.500" stroke="#f4c653" strokeWidth="3.200" strokeLinecap="round" /><path d="M42 24v11" stroke="#fff" strokeWidth="3.200" strokeLinecap="round" />
              </Svg>
            </Logo>
            <HeadRight><CloseX>X</CloseX><HeadTail>n</HeadTail></HeadRight>
          </ManagerHead>
          <ClockRow><span>10:2</span><span>9</span></ClockRow>
          <Menu>
            <MenuItem $w={138} $gap={6} $ls={0.25}>
              <Svg w={52} h={52}><g transform="translate(-3.500 0)"><path d="M0 6l6 7M6.500 0v34c0 9 3 16.500 9 16.500h32V0" stroke="#000" strokeWidth="2.500" /><path d="M1 37l6 6" stroke="#000" strokeWidth="3" /></g></Svg>Research Areas
            </MenuItem>
            <MenuItem $w={207} $gap={14} $ls={0.4}>
              <Svg w={64} h={44}><path d="M1.200 1h61.600v41.500H1.200z" stroke="#000" strokeWidth="2.400" /></Svg>Distribution
            </MenuItem>
            <MenuItem $w={138} $gap={9} $ls={0}>
              <Svg w={52} h={52}><path d="M8 33c5 7 12 14 17 17.500C31 47 38 40 43 33" stroke="#000" strokeWidth="2.600" /></Svg>Help
            </MenuItem>
          </Menu>
        </Manager>

        <Login>
          <LoginTitle>
            <Java /><Label $ls={-0.15}>office Login</Label><Fill />
            <Controls $gap={35.5} $pr={18}><Min c="#fff" /><Svg w={10} h={10}><path d="M0 .5h9v9H0z" stroke="#fff" /></Svg><Close c="#fff" /></Controls>
          </LoginTitle>
          <LoginHead>Office</LoginHead>
          <Form>
            <FormRow $h={51}>
              <FieldName $w={38} $pt={17} $ls={-1.2}>ID:</FieldName>
              <FieldWrap $w={241} $h={40} $pl={1} $pt={1}><Input $w={243} $h={30} $focus /></FieldWrap>
            </FormRow>
            <FormRow $h={37}>
              <FieldName $w={95} $pt={5} $ls={0.2}>Password:</FieldName>
              <FieldWrap $w={185} $h={37} $pl={4} $pt={3}><Input $w={182} $h={27} /></FieldWrap>
            </FormRow>
            <Enter>Enter</Enter>
          </Form>
        </Login>
      </Screen>
    </>
  );
}
